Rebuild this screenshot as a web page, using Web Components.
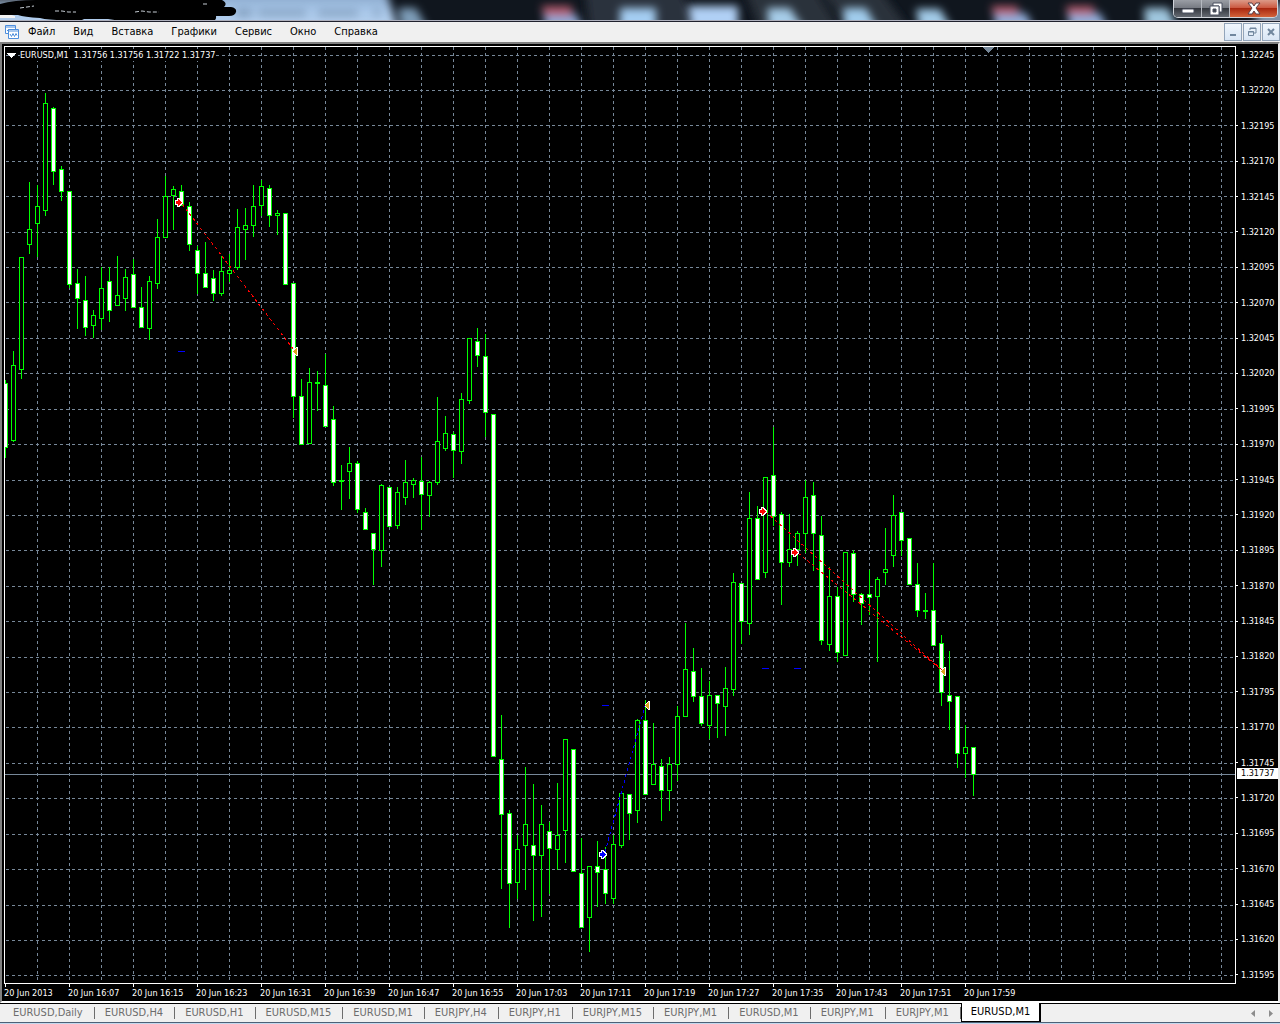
<!DOCTYPE html>
<html lang="ru">
<head>
<meta charset="utf-8">
<title>EURUSD,M1</title>
<style>
    body {
        margin:0;
        height:100vh;
        overflow:hidden;
        background:#f0f0f0;
        font-family:"DejaVu Sans Condensed","DejaVu Sans",Tahoma,sans-serif;
        font-size:11px;
    }
</style>
</head>
<body>
<trade-terminal>
    <title-bar slot="title"></title-bar>
    <menu-bar slot="menu">
        <menu-item>Файл</menu-item>
        <menu-item>Вид</menu-item>
        <menu-item>Вставка</menu-item>
        <menu-item>Графики</menu-item>
        <menu-item>Сервис</menu-item>
        <menu-item>Окно</menu-item>
        <menu-item>Справка</menu-item>
    </menu-bar>
    <price-chart>EURUSD,M1&nbsp; 1.31756 1.31756 1.31722 1.31737</price-chart>
    <chart-tabs slot="tabs">
        <chart-tab>EURUSD,Daily</chart-tab>
        <chart-tab>EURUSD,H4</chart-tab>
        <chart-tab>EURUSD,H1</chart-tab>
        <chart-tab>EURUSD,M15</chart-tab>
        <chart-tab>EURUSD,M1</chart-tab>
        <chart-tab>EURJPY,H4</chart-tab>
        <chart-tab>EURJPY,H1</chart-tab>
        <chart-tab>EURJPY,M15</chart-tab>
        <chart-tab>EURJPY,M1</chart-tab>
        <chart-tab>EURUSD,M1</chart-tab>
        <chart-tab>EURJPY,M1</chart-tab>
        <chart-tab>EURJPY,M1</chart-tab>
        <chart-tab active>EURUSD,M1</chart-tab>
    </chart-tabs>
</trade-terminal>

<script>
class Base extends HTMLElement {
    constructor(){
        super();
        this.shadow = this.attachShadow({mode:'open'});
        this.shadow.innerHTML = this.render();
    }
}

customElements.define("trade-terminal",class TradeTerminal extends Base {
    render(){
        return `<style>
            :host {
                display:flex;
                flex-direction:column;
                height:100vh;
            }
            main {
                flex:1;
                min-height:0;
                display:flex;
            }
        </style>
        <slot name="title"></slot>
        <slot name="menu"></slot>
        <main><slot></slot></main>
        <slot name="tabs"></slot>`;
    }
});

customElements.define("title-bar",class TitleBar extends Base {
    render(){
        return `<style>
            :host {
                display:flex;
                justify-content:flex-end;
                position:relative;
                height:20px;
                background:#10161e;
                border-bottom:1px solid #aeb0bd;
                box-shadow:0 1px 0 #20222e;
                margin-bottom:1px;
            }
            svg.glass {
                position:absolute;
                left:0;
                top:0;
                max-width:100%;
            }
            .buttons {
                position:relative;
                display:flex;
                height:17px;
                margin-right:2px;
                border:1px solid #d0d4da;
                border-top:0;
                border-radius:0 0 5px 5px;
                overflow:hidden;
            }
            button {
                display:flex;
                align-items:center;
                justify-content:center;
                width:28px;
                padding:0;
                border:0;
                border-right:1px solid #b5b9c0;
                background:linear-gradient(#9a9ea5,#777b83 45%,#34383f 50%,#656a72);
            }
            button.close {
                width:47px;
                border-right:0;
                background:linear-gradient(#dc9a88,#cc5a42 45%,#a92810 50%,#d3633a);
            }
        </style>
        <svg class="glass" width="1280" height="20" viewBox="0 0 1280 20" preserveAspectRatio="xMinYMin slice" aria-hidden="true">
            <defs>
                <filter id="soft" x="-20%" y="-100%" width="140%" height="300%"><feGaussianBlur stdDeviation="4"/></filter>
                <linearGradient id="sky" x1="0" y1="0" x2="0" y2="1">
                    <stop offset="0" stop-color="#7f9cbf"/>
                    <stop offset=".5" stop-color="#a9c8ea"/>
                    <stop offset="1" stop-color="#b8d2ee"/>
                </linearGradient>
            </defs>
            <g filter="url(#soft)">
                <path d="M-20 -10H386L398 30H-20Z" fill="url(#sky)"/>
                <path d="M-20 -10H60V5H-20Z" fill="#50565e"/>
                <path d="M398 8H416L428 30H402Z" fill="#7d9cb8"/>
                <path d="M585 -10H680L700 30H590Z" fill="#2b333c"/>
                <path d="M745 -10H815L840 30H760Z" fill="#2a323b"/>
                <path d="M820 -10H880L910 30H850Z" fill="#29313a"/>
            </g>
            <g filter="url(#soft)">
                <path d="M543 14H576L583 30H547Z" fill="#8ea9d8"/>
                <path d="M541 6H572V16H545Z" fill="#b25a6c"/>
                <path d="M620 8H656V30H620Z" fill="#a4cdf2"/>
                <path d="M688 6H738V30H692Z" fill="#b0d0f5"/>
                <path d="M767 8H790L804 30H769Z" fill="#a6cce8"/>
                <path d="M843 8H866L878 30H845Z" fill="#a0ccec"/>
                <path d="M916 9H940L952 30H920Z" fill="#a2cbe8"/>
                <path d="M993 13H1026L1034 30H997Z" fill="#91aedb"/>
                <path d="M991 6H1018V15H994Z" fill="#b25a6c"/>
                <path d="M1067 13H1100L1108 30H1071Z" fill="#91aedb"/>
                <path d="M1066 6H1094V15H1068Z" fill="#b25a6c"/>
                <path d="M1144 8H1168L1178 30H1146Z" fill="#9fc6de"/>
                <path d="M1256 4H1290V30H1256Z" fill="#7e92a8"/>
            </g>
            <g filter="url(#soft)" opacity=".4" fill="#49637f">
                <path d="M236 9H252V17H236ZM258 10H306V16H258ZM318 10H358V16H318ZM374 9H380V16H374Z"/>
            </g>
            <path d="M0 15Q8 13 15 16V18H0Z" fill="#f2f2f2"/>
            <path d="M0 4Q14 0 36 0H222Q228 3 224 7H231Q237 8 236 12Q235 16 229 16H216Q217 22 208 22H124Q116 20 108 19H84Q80 22 64 20Q48 20 40 18Q24 17 18 15H0Z" fill="#000"/>
            <path d="M20 8L27 7L34 6M55 11L62 11L68 12L76 12M135 12L142 11L149 12L159 12M203 4L207 4" fill="none" stroke="#c5ccd3" stroke-dasharray="4 2"/>
        </svg>
        <div class="buttons">
            <button aria-label="Свернуть"><svg width="14" height="12"><rect x="1" y="6" width="12" height="4" rx="1" fill="#fff" stroke="#4b5060"/></svg></button>
            <button aria-label="Восстановить"><svg width="14" height="14"><path d="M4 1H13V10H10V4H4Z" fill="#fff" stroke="#4b5060"/><path fill-rule="evenodd" d="M1 4H10V13H1ZM4 7V10H7V7Z" fill="#fff" stroke="#4b5060"/></svg></button>
            <button class="close" aria-label="Закрыть"><svg width="14" height="13"><path d="M1 1H5L7 4L9 1H13L9 6L13 12H9L7 9L5 12H1L5 6Z" fill="#fff" stroke="#5b4048"/></svg></button>
        </div>`;
    }
});

customElements.define("menu-bar",class MenuBar extends Base {
    render(){
        return `<style>
            :host {
                display:flex;
                align-items:center;
                height:20px;
                background:#f0f0f0;
                padding-left:5px;
            }
            nav {
                display:flex;
                gap:18px;
                margin-left:9px;
                flex:1;
            }
            .mdi {
                display:flex;
                gap:1px;
            }
            .mdi button {
                width:18px;
                height:18px;
                padding:0;
                display:flex;
                align-items:center;
                justify-content:center;
                border:1px solid #93a5ba;
                background:linear-gradient(#f0f6fd,#d9e6f5);
            }
        </style>
        <svg width="14" height="14" viewBox="0 0 14 14" fill="none" stroke="#4f8fdc" aria-hidden="true">
            <path d="M.5 .5H10.5V8.5H.5ZM.5 2H10.5" fill="#fff"/>
            <path d="M2 6L4 4L5 6"/>
            <path d="M3.5 4.5H13.5V13.5H3.5ZM3.5 6H13.5" fill="#fff"/>
            <path d="M5 9L6.5 11.5L8 8.5L9.5 11.5L11 8.5L12 10.5"/>
        </svg>
        <nav><slot></slot></nav>
        <div class="mdi">
            <button aria-label="Свернуть окно"><svg width="10" height="10"><path d="M2 8H8" stroke="#71879e" stroke-width="2"/></svg></button>
            <button aria-label="Восстановить окно"><svg width="10" height="10" fill="none" stroke="#71879e"><path d="M3 1H9V6H7M3 1V3M3 1.5H9M1.5 4.5H6.5V8.5H1.5ZM1 5H7"/></svg></button>
            <button aria-label="Закрыть окно"><svg width="10" height="10"><path d="M2 2L8 8M8 2L2 8" stroke="#71879e" stroke-width="2"/></svg></button>
        </div>`;
    }
});

customElements.define("menu-item",class MenuItem extends Base {
    render(){
        return `<style>
            :host { display:block; }
            button {
                display:block;
                padding:0;
                border:0;
                background:none;
                color:#000;
                font:inherit;
                line-height:20px;
            }
        </style>
        <button><slot></slot></button>`;
    }
});

// high, body top, body bottom, low, filled
const CANDLES = [
    [380,383,448,458,1],[351,365,441,442,0],[257,257,370,379,0],[182,229,245,254,0],
    [185,206,224,257,0],[93,103,211,216,0],[107,108,172,185,1],[166,169,192,201,1],
    [191,191,285,288,1],[269,283,299,329,1],[276,300,328,336,1],[310,315,326,338,0],
    [267,288,319,330,0],[267,281,311,322,1],[256,295,306,306,0],[269,277,299,311,0],
    [259,274,308,308,1],[287,307,328,328,1],[276,281,329,340,0],[219,237,284,289,0],
    [176,196,238,238,0],[186,189,196,230,0],[185,191,206,206,1],[202,206,245,251,1],
    [246,250,274,294,1],[242,273,288,288,1],[270,278,294,301,1],[256,271,294,296,0],
    [254,270,274,282,0],[209,227,268,270,0],[208,225,230,260,0],[185,206,226,237,0],
    [180,186,206,216,0],[185,188,216,227,1],[210,213,216,235,0],[213,213,285,285,1],
    [283,283,397,418,1],[379,396,445,445,1],[368,382,444,444,0],[371,382,384,411,0],
    [354,385,427,427,1],[406,419,483,486,1],[465,480,482,510,0],[447,463,472,499,0],
    [461,463,510,513,1],[508,512,530,530,1],[533,533,550,585,1],[484,485,551,567,0],
    [487,487,527,527,1],[487,492,526,529,0],[460,482,498,505,0],[478,480,485,498,0],
    [457,481,495,530,1],[481,482,496,517,0],[397,441,483,485,0],[416,433,449,451,0],
    [432,434,451,478,1],[393,399,452,464,0],[338,338,401,404,0],[328,341,356,367,1],
    [334,356,413,437,1],[414,414,757,757,1],[715,759,815,889,1],[810,813,884,928,1],
    [835,849,883,899,0],[767,824,846,890,0],[784,845,856,921,1],[805,824,856,917,0],
    [822,831,849,894,1],[783,835,850,870,0],[739,739,831,863,0],[749,749,872,872,1],
    [838,873,928,928,1],[866,866,918,952,0],[841,866,873,907,1],[847,869,894,904,1],
    [835,844,899,904,0],[791,793,846,848,0],[794,794,814,840,1],[719,720,811,823,0],
    [700,720,795,795,1],[723,764,785,785,0],[759,766,791,821,1],[757,764,791,811,0],
    [706,716,765,781,0],[623,669,717,717,0],[648,671,697,702,1],[668,696,724,726,1],
    [681,695,726,739,0],[695,695,704,738,1],[667,688,707,736,0],[573,582,690,696,0],
    [583,583,622,644,1],[492,518,624,635,0],[506,518,580,580,1],[477,477,573,578,0],
    [427,475,517,526,1],[512,514,563,605,1],[514,549,563,567,0],[531,533,550,566,0],
    [480,497,534,553,0],[482,495,534,571,1],[516,535,641,645,1],[567,596,645,651,0],
    [587,596,653,662,1],[552,552,656,656,0],[550,553,595,602,1],[593,594,604,625,1],
    [570,594,598,615,1],[577,579,597,662,0],[528,569,573,585,0],[495,515,556,567,0],
    [512,512,541,556,1],[538,538,585,585,1],[563,584,611,617,1],[593,610,612,619,0],
    [563,610,646,646,1],[635,643,693,706,1],[651,695,702,730,1],[696,696,754,768,1],
    [725,747,754,778,0],[747,747,775,796,1]
];
const LEVELS = [55,90,125,161,196,232,267,302,338,373,409,444,480,515,550,586,621,657,692,727,763,798,834,869,905,940,975];
const TIMES = ["2013","16:07","16:15","16:23","16:31","16:39","16:47","16:55","17:03","17:11","17:19","17:27","17:35","17:43","17:51","17:59"];

customElements.define("price-chart",class PriceChart extends Base {
    grid(){
        let d = "";
        for(let y of LEVELS) d += `M6 ${y + 0.5}H1235`;
        for(let x = 37; x < 1235; x += 32) d += `M${x + 0.5} 47V983`;
        return `<path d="${d}" stroke="#778899" stroke-dasharray="3 3"/>`;
    }

    candles(){
        return CANDLES.map(([high,top,bottom,low,filled],i)=>{
            let x = 5 + i*8;
            let out = `<path d="M${x} ${high}h1V${low}h-1ZM${x-2} ${top}h5V${bottom}h-5Z" fill="#0f0"/>`;
            if(bottom - top > 2){
                out += `<rect x="${x-1}" y="${top+1}" width="3" height="${bottom-top-2}" fill="${filled ? "#fff" : "#000"}"/>`;
            }
            return out;
        }).join("");
    }

    // arrow where a trade was opened
    entry(x,y,color){
        return `<path d="M${x} ${y+2}h2v-2h3v1h1v1h1v1h1v3h-1v1h-1v1h-1v1h-3v-2h-2Z" fill="#fff"/>
            <path d="M${x+1} ${y+3}h2v-2h1v1h1v1h1v1h1v1h-1v1h-1v1h-1v1h-1v-2h-2Z" fill="${color}"/>`;
    }

    // triangle where it was closed
    exit(x,y){
        return `<path d="M${x+5} ${y}v9h-2v-1h-1v-1h-1v-1h-1v-3h1v-1h1v-1h1v-1Z" fill="#fff"/>
            <path d="M${x+4} ${y+1}v7h-1v-1h-1v-1h-1v-1h-1v-1h1v-1h1v-1h1v-1Z" fill="#daa520"/>`;
    }

    render(){
        let prices = LEVELS.map((y,i)=>`<li>${(1.32245 - i*0.00025).toFixed(5)}</li>`).join("");
        let times = TIMES.map(t=>`<li>20 Jun ${t}</li>`).join("");
        return `<style>
            :host {
                flex:1;
                display:grid;
                grid-template-columns:minmax(0,1fr) 42px;
                grid-template-rows:minmax(0,1fr) 17px;
                padding:2px 0 0 2px;
                border:2px solid #808080;
                border-right-color:#e8e8e8;
                border-bottom-color:#fff;
                background:#000;
                color:#fff;
                font-size:9px;
            }
            .plot {
                position:relative;
                border:1px solid #fff;
            }
            .plot svg {
                display:block;
                width:100%;
                height:100%;
            }
            .info {
                position:absolute;
                left:15px;
                top:2px;
                background:#000;
                line-height:12px;
                white-space:nowrap;
            }
            ul {
                list-style:none;
                margin:0;
                padding:0;
                display:flex;
            }
            .prices {
                position:relative;
                flex-direction:column;
                justify-content:space-between;
                padding:3px 0;
            }
            .prices li {
                display:flex;
                align-items:center;
                gap:3px;
                line-height:12px;
            }
            .prices li::before {
                content:"";
                width:2px;
                height:1px;
                background:#fff;
            }
            .prices li.now {
                position:absolute;
                left:1px;
                right:0;
                top:calc(100% * 722 / 938);
                padding-left:4px;
                line-height:11px;
                background:#fff;
                color:#000;
            }
            .prices li.now::before {
                display:none;
            }
            .times li {
                flex:0 0 calc(100% * 64 / 1232);
                line-height:12px;
                white-space:nowrap;
            }
            .times li::before {
                content:"";
                display:block;
                width:1px;
                height:3px;
                margin-left:1px;
                background:#fff;
            }
        </style>
        <div class="plot">
            <svg viewBox="5 47 1230 936" preserveAspectRatio="none" shape-rendering="crispEdges" role="img" aria-label="EURUSD">
                ${this.grid()}
                <path d="M5 774.5H1235" stroke="#778899"/>
                <path d="M982 47H994L988 53Z" fill="#778899"/>
                ${this.candles()}
                <g fill="none" stroke-dasharray="3 3">
                    <path d="M182 204L294 350M766 512L943 671M798 553L943 671" stroke="#f00"/>
                    <path d="M605 852L645 706" stroke="#00f"/>
                </g>
                <path d="M178 351.5h7M602 705.5h7M762 668.5h7M794 668.5h7" stroke="#00f"/>
                ${this.entry(175,198,"#f00")}
                ${this.entry(759,507,"#f00")}
                ${this.entry(791,548,"#f00")}
                ${this.entry(599,850,"#00f")}
                ${this.exit(293,347)}
                ${this.exit(645,701)}
                ${this.exit(941,667)}
                <path d="M7 53H16L11.5 58Z" fill="#fff"/>
            </svg>
            <div class="info"><slot></slot></div>
        </div>
        <ul class="prices">${prices}<li class="now">1.31737</li></ul>
        <ul class="times">${times}</ul>`;
    }
});

customElements.define("chart-tabs",class ChartTabs extends Base {
    render(){
        return `<style>
            :host {
                display:flex;
                align-items:stretch;
                height:18px;
                padding-left:3px;
                border-top:1px solid #000;
                border-bottom:1px solid #4d6076;
                margin-bottom:1px;
                background:#f0f0f0;
                box-shadow:0 1px 0 #c3d9ee;
            }
            nav {
                display:flex;
                flex:1;
                min-width:0;
            }
            .scroll {
                display:flex;
                align-items:center;
                gap:8px;
                padding-right:4px;
            }
            .scroll button {
                display:flex;
                justify-content:center;
                width:10px;
                padding:0;
                border:0;
                background:none;
            }
        </style>
        <nav role="tablist"><slot></slot></nav>
        <div class="scroll">
            <button aria-label="Назад"><svg width="4" height="7"><path d="M4 0V7L0 3.5Z" fill="#8c8c8c"/></svg></button>
            <button aria-label="Вперёд"><svg width="4" height="7"><path d="M0 0V7L4 3.5Z" fill="#8c8c8c"/></svg></button>
        </div>`;
    }
});

customElements.define("chart-tab",class ChartTab extends Base {
    render(){
        return `<style>
            :host {
                display:flex;
                align-items:center;
            }
            button {
                padding:0 11px 0 10px;
                border:0;
                border-right:1px solid #6d6d6d;
                background:none;
                color:#6d6d6d;
                font:inherit;
                line-height:12px;
                white-space:nowrap;
            }
            :host([active]) {
                margin-top:-1px;
                background:#fff;
                border:1px solid #000;
                border-top:0;
                border-right-width:2px;
            }
            :host([active]) button {
                border:0;
                padding:0 9px;
                color:#000;
            }
        </style>
        <button role="tab"><slot></slot></button>`;
    }
});
</script>
</body>
</html>
